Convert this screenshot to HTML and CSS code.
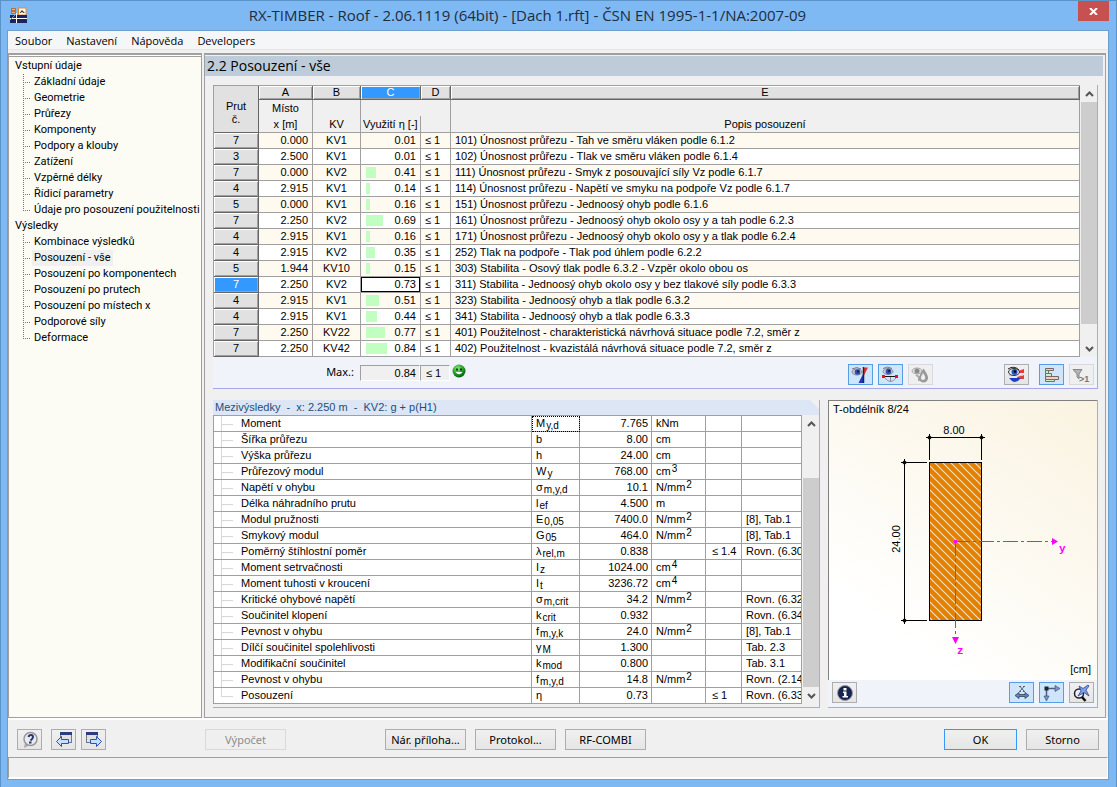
FILE: index.html
```html
<!DOCTYPE html>
<html lang="cs">
<head>
  <meta charset="UTF-8">
  <title>RX-TIMBER - Roof</title>
  <link rel="stylesheet" href="styles.css">
</head>
<body>

<div class="window">

  <!-- === Title bar === -->
  <header class="titlebar">
    <svg class="app-icon" width="17" height="16" viewBox="0 0 17 16">
      <rect x="1" y="1" width="5" height="6" fill="#b9703a"/>
      <path d="M2 2h3v1H2zM2 5h3v1H2z" fill="#e8b080"/>
      <rect x="8.500" y="1" width="7.500" height="7" fill="#fff" stroke="#e08a3c"/>
      <path d="M9.500 6l2.500-3 3 3h-1.500L12 5l-1.500 1z" fill="#503020"/>
      <rect x="0" y="8" width="17" height="8" fill="#1a2560"/>
      <path d="M0 11.500h17M6.500 6v10" stroke="#fff" fill="none"/>
      <path d="M0 13l5-5" stroke="#8090c8"/>
    </svg>
    <h1 class="title">RX-TIMBER - Roof - 2.06.1119 (64bit) - [Dach 1.rft] - ČSN EN 1995-1-1/NA:2007-09</h1>
    <button class="close" aria-label="Zavřít">
      <svg width="9" height="7" viewBox="0 0 9 7"><path d="M1 0l7 7M8 0L1 7" stroke="#fff" stroke-width="2"/></svg>
    </button>
  </header>

  <div class="client">
    <nav class="menu">
      <a href="#">Soubor</a>
      <a href="#">Nastavení</a>
      <a href="#">Nápověda</a>
      <a href="#">Developers</a>
    </nav>

    <div class="main">
      <!-- === Navigation tree === -->
      <aside class="tree">
        <p>Vstupní údaje</p>
        <ul>
          <li><a href="#">Základní údaje</a></li>
          <li><a href="#">Geometrie</a></li>
          <li><a href="#">Průřezy</a></li>
          <li><a href="#">Komponenty</a></li>
          <li><a href="#">Podpory a klouby</a></li>
          <li><a href="#">Zatížení</a></li>
          <li><a href="#">Vzpěrné délky</a></li>
          <li><a href="#">Řídicí parametry</a></li>
          <li><a href="#">Údaje pro posouzení použitelnosti</a></li>
        </ul>
        <p>Výsledky</p>
        <ul>
          <li><a href="#">Kombinace výsledků</a></li>
          <li><a href="#" class="current">Posouzení - vše</a></li>
          <li><a href="#">Posouzení po komponentech</a></li>
          <li><a href="#">Posouzení po prutech</a></li>
          <li><a href="#">Posouzení po místech x</a></li>
          <li><a href="#">Podporové síly</a></li>
          <li><a href="#">Deformace</a></li>
        </ul>
      </aside>

      <section class="panel">
        <h2 class="panel-title">2.2 Posouzení - vše</h2>

        <!-- === Design results === -->
        <div class="results">
          <div class="grid-wrap">
            <table class="grid checks">
              <colgroup>
                <col class="w-prut"><col class="w-x"><col class="w-kv"><col class="w-eta"><col class="w-lim"><col>
              </colgroup>
              <thead>
                <tr class="letters">
                  <th rowspan="2" class="corner">Prut<br>č.</th>
                  <th>A</th><th>B</th><th class="active">C</th><th>D</th><th>E</th>
                </tr>
                <tr class="names">
                  <th>Místo<br>x [m]</th><th>KV</th><th colspan="2" class="eta"><span>Využití η [-]</span></th><th>Popis posouzení</th>
                </tr>
              </thead>
              <tbody id="checks"></tbody>
            </table>
            <div class="scroll">
              <button aria-label="Nahoru"><svg width="9" height="6" viewBox="0 0 9 6"><path d="M1 5l3.500-3.500L8 5" fill="none" stroke="#555" stroke-width="2"/></svg></button>
              <div class="thumb thumb-top"></div>
              <button aria-label="Dolů"><svg width="9" height="6" viewBox="0 0 9 6"><path d="M1 1l3.500 3.500L8 1" fill="none" stroke="#555" stroke-width="2"/></svg></button>
            </div>
          </div>

          <div class="summary">
            <span class="max-label">Max.:</span>
            <output class="max">0.84</output>
            <output class="limit">≤ 1</output>
            <svg width="14" height="14" viewBox="0 0 14 14">
              <defs><radialGradient id="smile" cx=".4" cy=".3" r=".7"><stop offset="0" stop-color="#8fe87a"/><stop offset=".5" stop-color="#2fae2f"/><stop offset="1" stop-color="#045a10"/></radialGradient></defs>
              <circle cx="7" cy="7" r="6.500" fill="url(#smile)"/>
              <path d="M4 4.500h2v2H4zM8 4.500h2v2H8z" fill="#06400c"/>
              <path d="M3.500 8q3.500 4.500 7 0z" fill="#f4fff4"/>
            </svg>
            <div class="tools">
              <button class="tool on" aria-label="Zobrazit diagram">
                <svg width="19" height="18" viewBox="0 0 19 18">
                  <ellipse cx="6" cy="6" rx="5" ry="3" fill="#c3cbdc" stroke="#889"/><circle cx="6.500" cy="6" r="2.800" fill="#2c4fae"/><circle cx="7" cy="5.500" r="1" fill="#0a1540"/>
                  <path d="M1 3q5-3 9 0" fill="none" stroke="#778"/>
                  <path d="M12.500 1.500H17l-4.500 9z" fill="#e83030"/><path d="M12 8v9H7.500z" fill="#2038c0"/><path d="M12.500 1v16" stroke="#223" stroke-width="1.500"/>
                </svg>
              </button>
              <button class="tool on" aria-label="Zobrazit prut">
                <svg width="19" height="18" viewBox="0 0 19 18">
                  <ellipse cx="7" cy="5.500" rx="5" ry="3" fill="#c3cbdc" stroke="#889"/><circle cx="7.500" cy="5.500" r="2.800" fill="#2c4fae"/><circle cx="8" cy="5" r="1" fill="#0a1540"/>
                  <path d="M2 2.500q5-3 9 0" fill="none" stroke="#778"/>
                  <path d="M3 10.500h13" stroke="#111"/><path d="M4 12q5.500 7 11 0M9.500 11v5" fill="none" stroke="#8593a8"/>
                  <path d="M1 9h3v3H1zM14 9h3v3h-3z" fill="#f01010"/>
                </svg>
              </button>
              <button class="tool off" disabled aria-label="Barvy">
                <svg width="19" height="18" viewBox="0 0 19 18">
                  <ellipse cx="6" cy="5" rx="5" ry="3" fill="#ddd" stroke="#aaa"/><circle cx="6" cy="5" r="2.500" fill="#8a8a8a"/>
                  <path d="M5 9l3 2v4" fill="none" stroke="#aaa" stroke-width="2"/>
                  <path d="M12.500 2.500q5 7 4.500 10-1 4-4.500 4T8 12.500q0-3 4.500-10z" fill="#999"/><path d="M12 7q3 4 2 6-2 2-4 0-.500-2 2-6z" fill="#eee"/>
                </svg>
              </button>
              <span class="spacer"></span>
              <button class="tool" aria-label="Barevné pruhy">
                <svg width="19" height="18" viewBox="0 0 19 18">
                  <path d="M11 5l6-2v4h-6zM10 11l7-2v4h-7z" fill="#e83838"/><path d="M2 8q8 4 14 0v2H2z" fill="#ccc"/><path d="M2 12h12q-5 6-9 3z" fill="#1f3fc8"/>
                  <ellipse cx="7" cy="6" rx="5.500" ry="3.500" fill="#dfe8f8" stroke="#333"/><circle cx="7.500" cy="6" r="3" fill="#2458b8"/><circle cx="8" cy="5.500" r="1.300" fill="#000"/>
                  <path d="M1 3q6-4 11 1" fill="none" stroke="#222"/>
                </svg>
              </button>
              <button class="tool on gap" aria-label="Sloupce využití">
                <svg width="19" height="18" viewBox="0 0 19 18">
                  <path d="M3.500 2.500h8v2h-8z" fill="#f6c8c8" stroke="#766"/><path d="M3.500 4.500h3v3h-3z" fill="#c8f0c8" stroke="#676"/>
                  <path d="M3.500 7.500h6v3h-6z" fill="#c8f0c8" stroke="#676"/><path d="M3.500 10.500h13v3h-13z" fill="#f6c8c8" stroke="#766"/><path d="M3.500 13.500h9v2h-9z" fill="#c8f0c8" stroke="#676"/>
                </svg>
              </button>
              <button class="tool off" disabled aria-label="Filtr">
                <svg width="19" height="18" viewBox="0 0 19 18">
                  <path d="M1 3.500h9L7 8v5l-2-2V8z" fill="#b4b4b4" stroke="#888"/>
                  <text x="7" y="16" class="icon-text">&gt;1</text>
                </svg>
              </button>
            </div>
          </div>
        </div>

        <div class="lower">
          <!-- === Intermediate results === -->
          <div class="details">
            <h3 class="details-title">Mezivýsledky&nbsp; -&nbsp; x: 2.250 m&nbsp; -&nbsp; KV2: g + p(H1)</h3>
            <div class="grid-wrap">
              <table class="grid values">
                <colgroup>
                  <col><col class="w-sym"><col class="w-val"><col class="w-unit"><col class="w-cond"><col class="w-ref">
                </colgroup>
                <tbody id="values"></tbody>
              </table>
              <div class="scroll">
                <button aria-label="Nahoru"><svg width="9" height="6" viewBox="0 0 9 6"><path d="M1 5l3.500-3.500L8 5" fill="none" stroke="#555" stroke-width="2"/></svg></button>
                <div class="thumb thumb-bottom"></div>
                <button aria-label="Dolů"><svg width="9" height="6" viewBox="0 0 9 6"><path d="M1 1l3.500 3.500L8 1" fill="none" stroke="#555" stroke-width="2"/></svg></button>
              </div>
            </div>
          </div>

          <!-- === Cross-section graphic === -->
          <div class="graphic">
            <div class="canvas">
              <svg class="section" width="268" height="279" viewBox="829 401 268 279">
                <defs>
                  <pattern id="hatch" width="8" height="8" patternUnits="userSpaceOnUse">
                    <path d="M-1 -1l10 10M-1 7l2 2M7 -1l2 2" stroke="#f8e0bc" stroke-width="1.200"/>
                  </pattern>
                </defs>
                <text x="833" y="413" class="label">T-obdélník 8/24</text>
                <text x="954" y="434" class="label" text-anchor="middle">8.00</text>
                <text x="900" y="539" class="label" text-anchor="middle" transform="rotate(-90 900 539)">24.00</text>
                <text x="1091" y="673" class="label" text-anchor="end">[cm]</text>
                <rect x="929.500" y="462.500" width="52" height="158" fill="#e28000"/>
                <rect x="929.500" y="462.500" width="52" height="158" fill="url(#hatch)" stroke="#000"/>
                <path d="M926 437.500h59M929.500 434v26M981.500 434v26M901 462.500h26M901 620.500h26M904.500 459v165" stroke="#000"/>
                <path d="M929.500 435l2.500 2.500-2.500 2.500-2.500-2.500zM981.500 435l2.500 2.500-2.500 2.500-2.500-2.500zM904.500 460l2.500 2.500-2.500 2.500-2.500-2.500zM904.500 618l2.500 2.500-2.500 2.500-2.500-2.500z"/>
                <path d="M955 541.500h97" stroke="#f0f" stroke-dasharray="15 3 3 3"/>
                <path d="M955.500 541v96" stroke="#f0f" stroke-dasharray="15 3 3 3"/>
                <path d="M954 540h3v3h-3zM1052 538l6 3.500-6 3.500zM952 637h7l-3.500 7z" fill="#f0f"/>
                <text x="1059" y="552" class="axis">y</text>
                <text x="957" y="654" class="axis">z</text>
              </svg>
            </div>
            <div class="graphic-tools">
              <button class="tool" aria-label="Informace">
                <svg width="18" height="18" viewBox="0 0 18 18"><circle cx="9" cy="9" r="7.500" fill="#17264f" stroke="#99a"/><path d="M7.500 4h3v2.500h-3zM7 7.500h3.500V12H12v1.500H6.500V12H8V9H7z" fill="#fff"/></svg>
              </button>
              <span class="spacer"></span>
              <button class="tool on" aria-label="Kóty">
                <svg width="18" height="18" viewBox="0 0 18 18"><path d="M7 2.500l4 4.500M11 2.500L7 7M6 2.500h2M10 2.500h2M6 7.500h2M10 7.500h2" stroke="#444" stroke-width=".8"/><path d="M2 11.500l4-3v2h6v-2l4 3-4 3v-2H6v2z" fill="#5f82cc" stroke="#345" stroke-width=".8"/></svg>
              </button>
              <button class="tool on" aria-label="Osy">
                <svg width="19" height="18" viewBox="0 0 19 18"><path d="M4 4.500h10M4.500 4v9" stroke="#4a5f90" stroke-width="1.500"/><path d="M13 1.500l5 3-5 3zM2 12h5l-2.500 5z" fill="#7894d4" stroke="#345" stroke-width=".6"/><rect x="2.500" y="2.500" width="4" height="4" fill="#222"/></svg>
              </button>
              <button class="tool" aria-label="Zobrazit vše">
                <svg width="19" height="18" viewBox="0 0 19 18"><circle cx="7" cy="9.500" r="4.500" fill="#eef" stroke="#222" stroke-width="1.500"/><path d="M10 13l3.500 4" stroke="#111" stroke-width="2.500"/><path d="M7 2l4 2.500L16 1l1 1-3 4 3 6-5-3.500L6 12l3-5z" fill="#7f9ce6" stroke="#2c4690" stroke-width=".8"/></svg>
              </button>
            </div>
          </div>
        </div>
      </section>
    </div>

    <!-- === Dialog buttons === -->
    <footer class="actions">
      <button class="tool" aria-label="Nápověda">
        <svg width="18" height="18" viewBox="0 0 18 18"><path d="M4 12l-1 5 5-2.500z" fill="#aaa"/><circle cx="9.500" cy="8" r="6.500" fill="#e8ebf2" stroke="#999" stroke-width="1.500"/><path d="M7.500 6q.5-2 2.500-2t2 2q0 1.400-2.500 3.500" fill="none" stroke="#27386e" stroke-width="2"/><rect x="8" y="10.500" width="2.500" height="2" fill="#27386e"/></svg>
      </button>
      <button class="tool prev" aria-label="Předchozí">
        <svg width="18" height="18" viewBox="0 0 18 18"><rect x="5.500" y="1.500" width="11" height="10" fill="#e0e0e0" stroke="#777"/><path d="M5 1h12v3H5z" fill="#2c3c80"/><path d="M1.500 10.500l5-5v3h7v4h-7v3z" fill="#c4e0ff" stroke="#2c52b0"/></svg>
      </button>
      <button class="tool next" aria-label="Další">
        <svg width="18" height="18" viewBox="0 0 18 18"><rect x="1.500" y="1.500" width="11" height="10" fill="#e0e0e0" stroke="#777"/><path d="M1 1h12v3H1z" fill="#2c3c80"/><path d="M16.500 10.500l-5-5v3h-6v4h6v3z" fill="#c4e0ff" stroke="#2c52b0"/></svg>
      </button>
      <button class="btn calc" disabled>Výpočet</button>
      <button class="btn annex">Nár. příloha...</button>
      <button class="btn">Protokol...</button>
      <button class="btn">RF-COMBI</button>
      <span class="spacer"></span>
      <button class="btn wide default">OK</button>
      <button class="btn wide">Storno</button>
    </footer>
    <div class="status"></div>
  </div>
</div>

<script src="script.js"></script>
</body>
</html>
```
FILE: styles.css
```css
/* ===== Global Styles ===== */
* {
  margin: 0;
  padding: 0;
  box-sizing: border-box;
}
body {
  font-family: "Noto Sans", sans-serif;
  font-size: 11px;
  color: #000;
}
a {
  color: inherit;
  text-decoration: none;
}
button {
  font: inherit;
  color: inherit;
}
svg {
  display: block;
}
.spacer {
  flex: 1;
}

/* ===== Window ===== */
.window {
  min-height: 100vh;
  background: #7eb9f3;
  border: 1px solid #5b93c8;
  padding: 0 7px 7px 6px;
  display: flex;
  flex-direction: column;
}
.titlebar {
  display: flex;
  align-items: flex-start;
  height: 29px;
}
.app-icon {
  margin: 6px 0 0 3px;
}
.title {
  flex: 1;
  padding-right: 50px;
  font-family: "Open Sans", sans-serif;
  font-size: 15px;
  font-weight: normal;
  line-height: 29px;
  text-align: center;
  white-space: nowrap;
  color: #222c3c;
}
.close {
  width: 31px;
  height: 20px;
  border: none;
  background: #c75050;
  display: flex;
  align-items: center;
  justify-content: center;
}
.client {
  flex: 1;
  display: flex;
  flex-direction: column;
  background: #f0f0f0;
  border: 1px solid #6a9fd0;
}
.menu {
  display: flex;
  gap: 14px;
  padding-left: 7px;
  height: 19px;
  font-family: "Open Sans", sans-serif;
  line-height: 19px;
  background: #f5f6f7;
  border-bottom: 1px solid #e6e6e6;
}

/* ===== Main area ===== */
.main {
  flex: 1;
  display: flex;
  gap: 2px;
  margin-top: 3px;
  border-bottom: 2px solid #fff;
}
.tree {
  width: 194px;
  padding: 3px 0 0 6px;
  background: #fcfcf4;
  border: 1px solid #a0a0a0;
  border-top-width: 2px;
  box-shadow: inset 0 1px #fff, inset 0 2px #a0a0a0;
  font-family: Roboto, sans-serif;
  line-height: 16px;
  white-space: nowrap;
}
.tree ul {
  list-style: none;
  margin-left: 8px;
}
.tree li {
  display: flex;
  height: 16px;
  background: repeating-linear-gradient(#777 0 1px, transparent 1px 2px) 0 0 / 1px 16px no-repeat;
}
.tree li:last-child {
  background-size: 1px 9px;
}
.tree li::before {
  content: "";
  flex: none;
  width: 8px;
  height: 1px;
  margin: 8px 1px 0 0;
  background: repeating-linear-gradient(90deg, #777 0 1px, transparent 1px 2px);
}
.tree a {
  padding: 0 2px;
}
.tree .current {
  background: #f0f0f0;
}
.panel {
  flex: 1;
  min-width: 0;
  padding: 1px 7px 9px 8px;
  border: 1px solid #a0a0a0;
  border-top-width: 2px;
  margin-right: 2px;
}
.panel-title {
  margin: 0 -5px 9px -8px;
  padding-left: 2px;
  font-family: "Open Sans", sans-serif;
  font-size: 14px;
  font-weight: normal;
  line-height: 20px;
  background: #becbd9;
}

/* ===== Grids ===== */
.grid-wrap {
  display: flex;
  gap: 1px;
}
.grid {
  flex: 1;
  width: 100%;
  min-width: 0;
  table-layout: fixed;
  border-collapse: separate;
  border-spacing: 0;
  border-left: 1px solid #a0a0a0;
  border-top: 1px solid #a0a0a0;
  background: #fff;
  font-family: "Liberation Sans", sans-serif;
  font-size: 11px;
  line-height: 15px;
}
.grid td {
  height: 16px;
  border-right: 1px solid #a0a0a0;
  border-bottom: 1px solid #a0a0a0;
  overflow: hidden;
  white-space: nowrap;
}
.grid th {
  font-weight: normal;
  background: #f0f0f0;
  border-right: 1px solid #a0a0a0;
  border-bottom: 1px solid #a0a0a0;
}
.checks .w-prut { width: 45px; }
.checks .w-x { width: 54px; }
.checks .w-kv { width: 48px; }
.checks .w-eta { width: 60px; }
.checks .w-lim { width: 30px; }
.letters th {
  height: 14px;
  line-height: 13px;
  background: #e1e1e1;
  border-right: 1px solid #666;
  border-bottom: 1px solid #666;
  box-shadow: inset 1px 1px #fff, inset -1px -1px #a0a0a0;
}
.letters .active {
  background: #3399ff;
  color: #fff;
}
.letters .corner {
  line-height: 13px;
  vertical-align: middle;
  padding-top: 8px;
  box-shadow: none;
}
.names th {
  height: 33px;
  line-height: 16px;
  vertical-align: bottom;
}
.names .eta {
  text-align: left;
}
.names .eta span {
  display: block;
  width: 60px;
  padding-left: 2px;
  border-right: 1px solid #a0a0a0;
  white-space: nowrap;
}
.checks tbody th {
  height: 16px;
  line-height: 13px;
  background: #e1e1e1;
  border-color: #666;
  box-shadow: inset 1px 1px #fff, inset -1px -1px #a0a0a0;
}
.checks tbody tr:nth-child(odd) td {
  background: #fffaf0;
}
.checks .num {
  text-align: right;
  padding-right: 4px;
}
.checks .kv {
  text-align: center;
}
.checks .lim {
  padding-left: 4px;
  line-height: 13px;
}
.checks .desc {
  padding-left: 4px;
}
.checks .ratio {
  display: flex;
  align-items: center;
  justify-content: space-between;
  padding: 0 4px 0 5px;
}
.bar {
  height: 11px;
  background: #c0ffc0;
}
.checks tbody .selected th {
  background: #3399ff;
  color: #fff;
}
.checks tbody .selected td {
  background: #fff;
}
.selected .ratio {
  outline: 1px solid #000;
  outline-offset: -1px;
}
.selected .bar {
  visibility: hidden;
}

/* ===== Scroll bars ===== */
.scroll {
  flex: none;
  width: 16px;
  display: flex;
  flex-direction: column;
  background: #f0f0f0;
}
.scroll button {
  height: 17px;
  border: none;
  background: none;
  display: flex;
  align-items: center;
  justify-content: center;
}
.thumb {
  background: #cdcdcd;
}
.thumb-top {
  flex: 1;
  margin-bottom: 16px;
}
.thumb-bottom {
  flex: 1;
  margin-top: 46px;
}

/* ===== Summary strip ===== */
.results {
  border-right: 1px solid #a8a8e8;
  border-bottom: 1px solid #a8a8e8;
}
.summary {
  display: flex;
  align-items: flex-start;
  height: 31px;
  padding-top: 7px;
  background: #f0f4fa;
}
.max-label {
  width: 147px;
  padding-right: 6px;
  line-height: 16px;
  text-align: right;
}
.max, .limit {
  height: 16px;
  margin-top: 1px;
  border: 1px solid #a0a0a0;
  border-right-color: #fff;
  border-bottom-color: #fff;
  background: #f0f0f0;
  font-family: "Liberation Sans", sans-serif;
  line-height: 15px;
}
.max {
  width: 60px;
  padding-right: 3px;
  text-align: right;
}
.limit {
  width: 30px;
  margin-right: 2px;
  padding-left: 5px;
}
.tools {
  flex: 1;
  display: flex;
  gap: 5px;
  padding: 0 3px 0 382px;
}
.tool {
  width: 25px;
  height: 21px;
  border: 1px solid #adadad;
  background: linear-gradient(#f0f0f0, #e5e5e5);
  display: flex;
  align-items: center;
  justify-content: center;
}
.tool.on {
  border-color: #569de5;
  background: #cfe5fb;
}
.tool.off {
  border-color: #d9d9d9;
  background: #efefef;
}
.tools .gap {
  margin-left: 5px;
}
.icon-text {
  font: bold 9px "Liberation Sans", sans-serif;
  fill: #777;
}

/* ===== Intermediate results ===== */
.lower {
  display: flex;
  gap: 8px;
  margin-top: 11px;
}
.details {
  flex: 1;
  min-width: 0;
  border-right: 1px solid #a8a8e8;
  border-bottom: 1px solid #a8a8e8;
  padding-bottom: 3px;
}
.details-title {
  padding-left: 2px;
  font-family: "Liberation Sans", sans-serif;
  font-size: 11px;
  font-weight: normal;
  line-height: 15px;
  color: #1f4e79;
  background: #dce6f4;
  clip-path: polygon(0 0, calc(100% - 9px) 0, 100% 9px, 100% 100%, 0 100%);
}
.values .w-sym { width: 48px; }
.values .w-val { width: 72px; }
.values .w-unit { width: 54px; }
.values .w-cond { width: 36px; }
.values .w-ref { width: 60px; }
.values td {
  padding: 0 4px;
}
.values .name {
  padding-left: 27px;
  background: linear-gradient(#d8d8d8, #d8d8d8) 7px 0 / 1px 100% no-repeat, linear-gradient(#d8d8d8, #d8d8d8) 7px 8px / 12px 1px no-repeat;
}
.values tr:last-child .name {
  background-size: 1px 8px, 12px 1px;
}
.values .val {
  text-align: right;
  padding-right: 3px;
}
.values .cond span {
  display: block;
  width: 26px;
  margin-left: 2px;
}
.values .ref {
  padding-right: 0;
}
.values sub, .values sup {
  margin-left: 1px;
  font-size: 10px;
  line-height: 1px;
}
.values sub {
  vertical-align: -2px;
}
.values sup {
  vertical-align: 3px;
}
.values .focus {
  outline: 1px dotted #000;
  outline-offset: -1px;
}

/* ===== Cross-section graphic ===== */
.graphic {
  width: 270px;
  display: flex;
  flex-direction: column;
  border-right: 1px solid #a8a8e8;
  border-bottom: 1px solid #a8a8e8;
}
.canvas {
  flex: 1;
  border-top: 1px solid #808080;
  border-left: 1px solid #808080;
  background: linear-gradient(35deg, #fff 20%, #faf3e0);
}
.graphic-tools {
  display: flex;
  gap: 5px;
  height: 27px;
  padding: 2px 3px 0 4px;
  background: #f0f4fa;
}
.label {
  font: 11px "Liberation Sans", sans-serif;
}
.axis {
  font: bold 11px "Liberation Mono", monospace;
  fill: #f0f;
}

/* ===== Dialog buttons ===== */
.actions {
  display: flex;
  height: 37px;
  padding: 9px 9px 0 9px;
}
.prev {
  margin: 0 5px 0 9px;
}
.btn {
  width: 81px;
  height: 21px;
  margin-right: 9px;
  border: 1px solid #adadad;
  background: linear-gradient(#f0f0f0, #e5e5e5);
  white-space: nowrap;
}
.btn:disabled {
  border-color: #d9d9d9;
  background: #efefef;
  color: #8d8d8d;
}
.calc {
  margin-left: 99px;
}
.annex {
  margin-left: 90px;
}
.wide {
  width: 73px;
}
.wide:last-child {
  margin-right: 0;
}
.default {
  border-color: #3399ff;
}
.status {
  height: 22px;
  border: 1px solid #a0a0a0;
  border-right-color: #fff;
  border-bottom: 2px solid #fff;
}
```
FILE: script.js
```js
// [member, x, load case, ratio, description]
const checks = [
  [7, "0.000", "KV1", "0.01", "101) Únosnost průřezu - Tah ve směru vláken podle 6.1.2"],
  [3, "2.500", "KV1", "0.01", "102) Únosnost průřezu - Tlak ve směru vláken podle 6.1.4"],
  [7, "0.000", "KV2", "0.41", "111) Únosnost průřezu - Smyk z posouvající síly Vz podle 6.1.7"],
  [4, "2.915", "KV1", "0.14", "114) Únosnost průřezu - Napětí ve smyku na podpoře Vz podle 6.1.7"],
  [5, "0.000", "KV1", "0.16", "151) Únosnost průřezu - Jednoosý ohyb podle 6.1.6"],
  [7, "2.250", "KV2", "0.69", "161) Únosnost průřezu - Jednoosý ohyb okolo osy y a tah podle 6.2.3"],
  [4, "2.915", "KV1", "0.16", "171) Únosnost průřezu - Jednoosý ohyb okolo osy y a tlak podle 6.2.4"],
  [4, "2.915", "KV2", "0.35", "252) Tlak na podpoře - Tlak pod úhlem podle 6.2.2"],
  [5, "1.944", "KV10", "0.15", "303) Stabilita - Osový tlak podle 6.3.2 - Vzpěr okolo obou os"],
  [7, "2.250", "KV2", "0.73", "311) Stabilita - Jednoosý ohyb okolo osy y bez tlakové síly podle 6.3.3"],
  [4, "2.915", "KV1", "0.51", "323) Stabilita - Jednoosý ohyb a tlak podle 6.3.2"],
  [4, "2.915", "KV1", "0.44", "341) Stabilita - Jednoosý ohyb a tlak podle 6.3.3"],
  [7, "2.250", "KV22", "0.77", "401) Použitelnost - charakteristická návrhová situace podle 7.2, směr z"],
  [7, "2.250", "KV42", "0.84", "402) Použitelnost - kvazistálá návrhová situace podle 7.2, směr z"]
];
const selected = 9;

// [name, symbol, value, unit, condition, reference]
const values = [
  ["Moment", "M<sub>y,d</sub>", "7.765", "kNm", "", ""],
  ["Šířka průřezu", "b", "8.00", "cm", "", ""],
  ["Výška průřezu", "h", "24.00", "cm", "", ""],
  ["Průřezový modul", "W<sub>y</sub>", "768.00", "cm<sup>3</sup>", "", ""],
  ["Napětí v ohybu", "σ<sub>m,y,d</sub>", "10.1", "N/mm<sup>2</sup>", "", ""],
  ["Délka náhradního prutu", "l<sub>ef</sub>", "4.500", "m", "", ""],
  ["Modul pružnosti", "E<sub>0,05</sub>", "7400.0", "N/mm<sup>2</sup>", "", "[8], Tab.1"],
  ["Smykový modul", "G<sub>05</sub>", "464.0", "N/mm<sup>2</sup>", "", "[8], Tab.1"],
  ["Poměrný štíhlostní poměr", "λ<sub>rel,m</sub>", "0.838", "", "≤ 1.4", "Rovn. (6.30"],
  ["Moment setrvačnosti", "I<sub>z</sub>", "1024.00", "cm<sup>4</sup>", "", ""],
  ["Moment tuhosti v kroucení", "I<sub>t</sub>", "3236.72", "cm<sup>4</sup>", "", ""],
  ["Kritické ohybové napětí", "σ<sub>m,crit</sub>", "34.2", "N/mm<sup>2</sup>", "", "Rovn. (6.32"],
  ["Součinitel klopení", "k<sub>crit</sub>", "0.932", "", "", "Rovn. (6.34"],
  ["Pevnost v ohybu", "f<sub>m,y,k</sub>", "24.0", "N/mm<sup>2</sup>", "", "[8], Tab.1"],
  ["Dílčí součinitel spolehlivosti", "γ<sub>M</sub>", "1.300", "", "", "Tab. 2.3"],
  ["Modifikační součinitel", "k<sub>mod</sub>", "0.800", "", "", "Tab. 3.1"],
  ["Pevnost v ohybu", "f<sub>m,y,d</sub>", "14.8", "N/mm<sup>2</sup>", "", "Rovn. (2.14"],
  ["Posouzení", "η", "0.73", "", "≤ 1", "Rovn. (6.33"]
];

document.getElementById("checks").innerHTML = checks.map(([member, x, kv, ratio, text], i) => `
  <tr class="${i === selected ? "selected" : ""}">
    <th>${member}</th><td class="num">${x}</td><td class="kv">${kv}</td>
    <td><div class="ratio"><span class="bar" style="width: ${ratio < 0.1 ? 0 : Math.round(ratio * 25)}px"></span>${ratio}</div></td>
    <td class="lim">≤ 1</td><td class="desc">${text}</td>
  </tr>`).join("");

document.getElementById("values").innerHTML = values.map(([name, symbol, value, unit, cond, ref], i) => `
  <tr>
    <td class="name">${name}</td><td class="${i === 0 ? "focus" : ""}">${symbol}</td><td class="val">${value}</td>
    <td>${unit}</td><td class="cond"><span>${cond}</span></td><td class="ref">${ref}</td>
  </tr>`).join("");
```
